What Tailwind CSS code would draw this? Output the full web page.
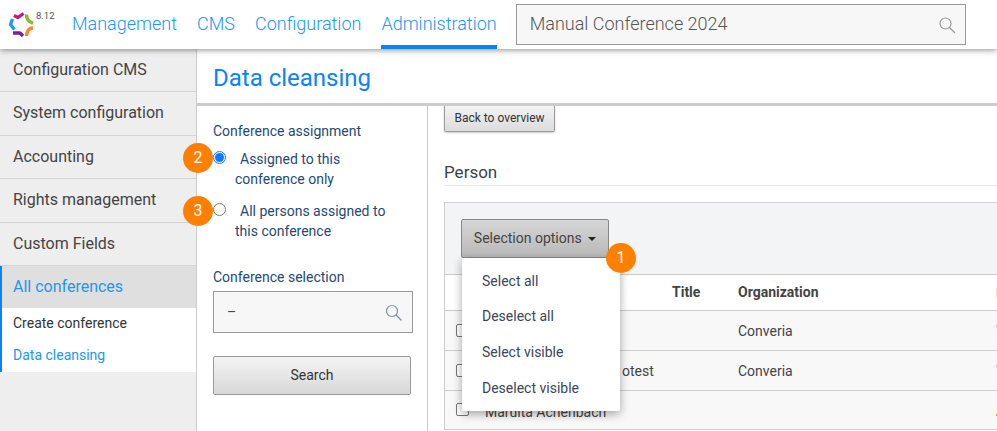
<!DOCTYPE html>
<html lang="en">
  <head>
    <meta charset="UTF-8" />
    <title>Data cleansing</title>
    <script src="https://cdn.jsdelivr.net/npm/@tailwindcss/browser@4"></script>
  </head>
  <body class="w-[997px] h-[431px] overflow-hidden bg-white font-['Roboto',sans-serif] text-[#333]">
    <!-- Header -->
    <header class="relative z-20 h-[49px] bg-white flex shadow-[0_1px_6px_rgba(0,0,0,0.45)]">
      <div class="w-[72px] shrink-0 relative">
        <svg class="absolute left-[8px] top-[11px]" width="27" height="27" viewBox="0 0 27 27" fill="none" stroke-width="3.4" stroke-linejoin="round">
          <path d="M6 4.5 L10 6.5 L15.5 2.5" stroke="#c2187c" />
          <path d="M18.5 3.5 Q18.5 10.5 25 12" stroke="#8ab82e" />
          <path d="M25 17 Q19 17 18.5 25" stroke="#f58a2c" />
          <path d="M5 22 L12 22 L15 25" stroke="#7b1fa2" />
          <path d="M4.5 8 L2.5 13.5 L6.5 18.5" stroke="#1e9bf0" />
        </svg>
        <span class="absolute left-[36px] top-[10px] text-[9.5px] leading-[12px] text-[#555]">8.12</span>
      </div>
      <nav class="flex text-[18px] font-light text-[#2196f3] gap-[20px] h-full">
        <a class="pt-[13px] leading-[22px]">Management</a>
        <a class="pt-[13px] leading-[22px]">CMS</a>
        <a class="pt-[13px] leading-[22px]">Configuration</a>
        <a class="pt-[13px] leading-[22px] border-b-[4px] border-[#0a84f5]">Administration</a>
      </nav>
      <div class="ml-[19px] mt-[4px] w-[450px] h-[41px] bg-[#f7f7f7] border border-[#999] flex items-center justify-between pl-[13px] pr-[9px] text-[18px] font-light text-[#555]">
        <span class="pb-[2px]">Manual Conference 2024</span>
        <svg width="18" height="18" viewBox="0 0 18 18" fill="none" stroke="#999" stroke-width="1.2"><circle cx="7.5" cy="7.5" r="5.5" /><path d="M11.5 11.5 L17 17" /></svg>
      </div>
    </header>

    <div class="flex h-[382px]">
      <!-- Sidebar -->
      <aside class="w-[197px] shrink-0 bg-[#eee] border-r border-[#ccc] text-[16px] text-[#444]">
        <div class="h-[43px] pl-[13px] pt-[10px] leading-[22px] border-b border-[#d4d4d4]">Configuration CMS</div>
        <div class="h-[43.5px] pl-[13px] pt-[10px] leading-[22px] border-b border-[#d4d4d4]">System configuration</div>
        <div class="h-[43.5px] pl-[13px] pt-[10px] leading-[22px] border-b border-[#d4d4d4]">Accounting</div>
        <div class="h-[43.5px] pl-[13px] pt-[10px] leading-[22px] border-b border-[#d4d4d4]">Rights management</div>
        <div class="h-[43.5px] pl-[13px] pt-[10px] leading-[22px] border-b border-[#d4d4d4]">Custom Fields</div>
        <div class="border-l-[2px] border-[#0a84f5]">
          <div class="h-[42px] pl-[11px] pt-[10px] leading-[22px] bg-[#dfdfdf] text-[#2196f3]">All conferences</div>
          <div class="bg-white h-[64px] pl-[11px] pt-[5px] text-[14px] leading-[20px]">
            <div class="h-[32px] text-[#333]">Create conference</div>
            <div class="text-[#2196f3]">Data cleansing</div>
          </div>
        </div>
      </aside>

      <div class="flex-1 min-w-0 flex flex-col">
        <h1 class="h-[57px] pl-[16px] pt-[13px] leading-[32px] text-[24px] font-normal text-[#0a84f5] border-b-[3px] border-[#ccc] shrink-0">Data cleansing</h1>
        <div class="flex flex-1 min-h-0">
          <!-- Filters -->
          <section class="w-[231px] shrink-0 border-r border-[#ccc] pl-[16px] pr-[14px] text-[14px] text-[#1f4a73]">
            <div class="pt-[15px] leading-[20px]">Conference assignment</div>
            <label class="relative block mt-[8px] pl-[22px] leading-[20px] h-[52px]">
              <span class="absolute left-0 top-[2px] size-[13px] rounded-full border border-[#0a7cff] bg-white flex items-center justify-center"><span class="size-[9px] rounded-full bg-[#0a7cff]"></span></span>
              <span class="pl-[5px]">Assigned to this</span><br />conference only
            </label>
            <label class="relative block pl-[22px] leading-[20px] h-[52px]">
              <span class="absolute left-0 top-[2px] size-[13px] rounded-full border border-[#767676] bg-white"></span>
              <span class="pl-[5px]">All persons assigned to</span><br />this conference
            </label>
            <div class="mt-[14px] leading-[20px]">Conference selection</div>
            <div class="mt-[4px] w-[200px] h-[42px] bg-[#f7f7f7] border border-[#999] flex items-center justify-between pl-[13px] pr-[10px] text-[#444]">
              <span>–</span>
              <svg width="17" height="17" viewBox="0 0 17 17" fill="none" stroke="#7a8fa6" stroke-width="1.2"><circle cx="7" cy="7" r="5.5" /><path d="M11 11 L16.5 16.5" /></svg>
            </div>
            <button class="mt-[23px] w-[198px] h-[39px] rounded-[2px] border border-[#999] bg-gradient-to-b from-[#f4f4f4] to-[#d8d8d8] text-[#333]">Search</button>
          </section>

          <!-- Content -->
          <section class="flex-1 min-w-0 pl-[16px] overflow-hidden relative">
            <button class="block w-[111px] h-[27px] -mt-[1px] rounded-b-[2px] border border-t-0 border-[#999] bg-gradient-to-b from-[#f4f4f4] to-[#dcdcdc] text-[12px] text-[#333] shadow-[0_1px_2px_rgba(0,0,0,0.2)]">Back to overview</button>
            <h2 class="mt-[29px] h-[25px] leading-[22px] text-[17px] font-normal text-[#3a3f4a] border-b border-[#e8e8e8]">Person</h2>
            <div class="mt-[16px] border-l border-[#ccc]">
              <div class="h-[72px] bg-[#f3f4f6] border-t border-[#d4d4d4] pl-[16px] pt-[16px]">
                <button class="w-[148px] h-[39px] rounded-[2px] border border-[#888] bg-gradient-to-b from-[#d6d6d6] to-[#b8b8b8] text-[14px] text-[#444]">
                  Selection options
                  <span class="inline-block ml-[3px] align-middle border-x-[4px] border-x-transparent border-t-[4px] border-t-[#222]"></span>
                </button>
              </div>
              <table class="w-[600px] table-fixed border-collapse text-[14px] text-[#444]">
                <tr class="h-[36px] bg-white border-y border-[#ccc] font-bold">
                  <td class="w-[227px]"></td>
                  <td class="w-[66px]">Title</td>
                  <td class="w-[258px]">Organization</td>
                  <td class="align-middle"><span class="block w-[3px] h-[10px] bg-[#fce8b0]"></span></td>
                </tr>
                <tr class="h-[40px] bg-[#f8f8f8] border-b border-[#ccc]">
                  <td class="pl-[11px]"><span class="block -mt-[1px] size-[13px] rounded-[2px] border border-[#767676] bg-white"></span></td>
                  <td></td>
                  <td class="pt-[1px]">Converia</td>
                  <td><span class="block w-[3px] h-[2px] -mt-[6px] bg-[#f0c060]"></span></td>
                </tr>
                <tr class="h-[40px] bg-[#f8f8f8] border-b border-[#ccc]">
                  <td class="pl-[11px] relative"><span class="block -mt-[1px] size-[13px] rounded-[2px] border border-[#767676] bg-white"></span><span class="absolute left-[177px] top-[10px]">otest</span></td>
                  <td></td>
                  <td class="pt-[1px]">Converia</td>
                  <td><span class="block w-[3px] h-[2px] -mt-[6px] bg-[#f0c060]"></span></td>
                </tr>
                <tr class="h-[39px] bg-[#f8f8f8] border-b border-[#ccc]">
                  <td class="pl-[11px] relative"><span class="block -mt-[1px] size-[13px] rounded-[2px] border border-[#767676] bg-white"></span><span class="absolute left-[40px] top-[11px] whitespace-nowrap">Marulta Achenbach</span></td>
                  <td></td>
                  <td></td>
                  <td><span class="block w-[3px] h-[2px] mt-[10px] bg-[#d9a050]"></span></td>
                </tr>
              </table>
            </div>
          </section>
        </div>
      </div>
    </div>

    <!-- Dropdown -->
    <div class="absolute z-10 left-[462px] top-[258px] w-[158px] h-[153px] bg-white rounded-b-[2px] shadow-[0_3px_10px_rgba(0,0,0,0.35)] pl-[20px] pt-[13px] text-[14px] leading-[20px] text-[#3c4658] flex flex-col">
      <span class="h-[35px]">Select all</span>
      <span class="h-[36px]">Deselect all</span>
      <span class="h-[36px]">Select visible</span>
      <span>Deselect visible</span>
    </div>

    <!-- Step badges -->
    <span class="absolute z-30 left-[606px] top-[243px] size-[30px] rounded-full bg-[#ff8000] text-white text-[16px] flex items-center justify-center">1</span>
    <span class="absolute z-30 left-[183px] top-[143px] size-[30px] rounded-full bg-[#ff8000] text-white text-[16px] flex items-center justify-center">2</span>
    <span class="absolute z-30 left-[183px] top-[196px] size-[30px] rounded-full bg-[#ff8000] text-white text-[16px] flex items-center justify-center">3</span>
  </body>
</html>
